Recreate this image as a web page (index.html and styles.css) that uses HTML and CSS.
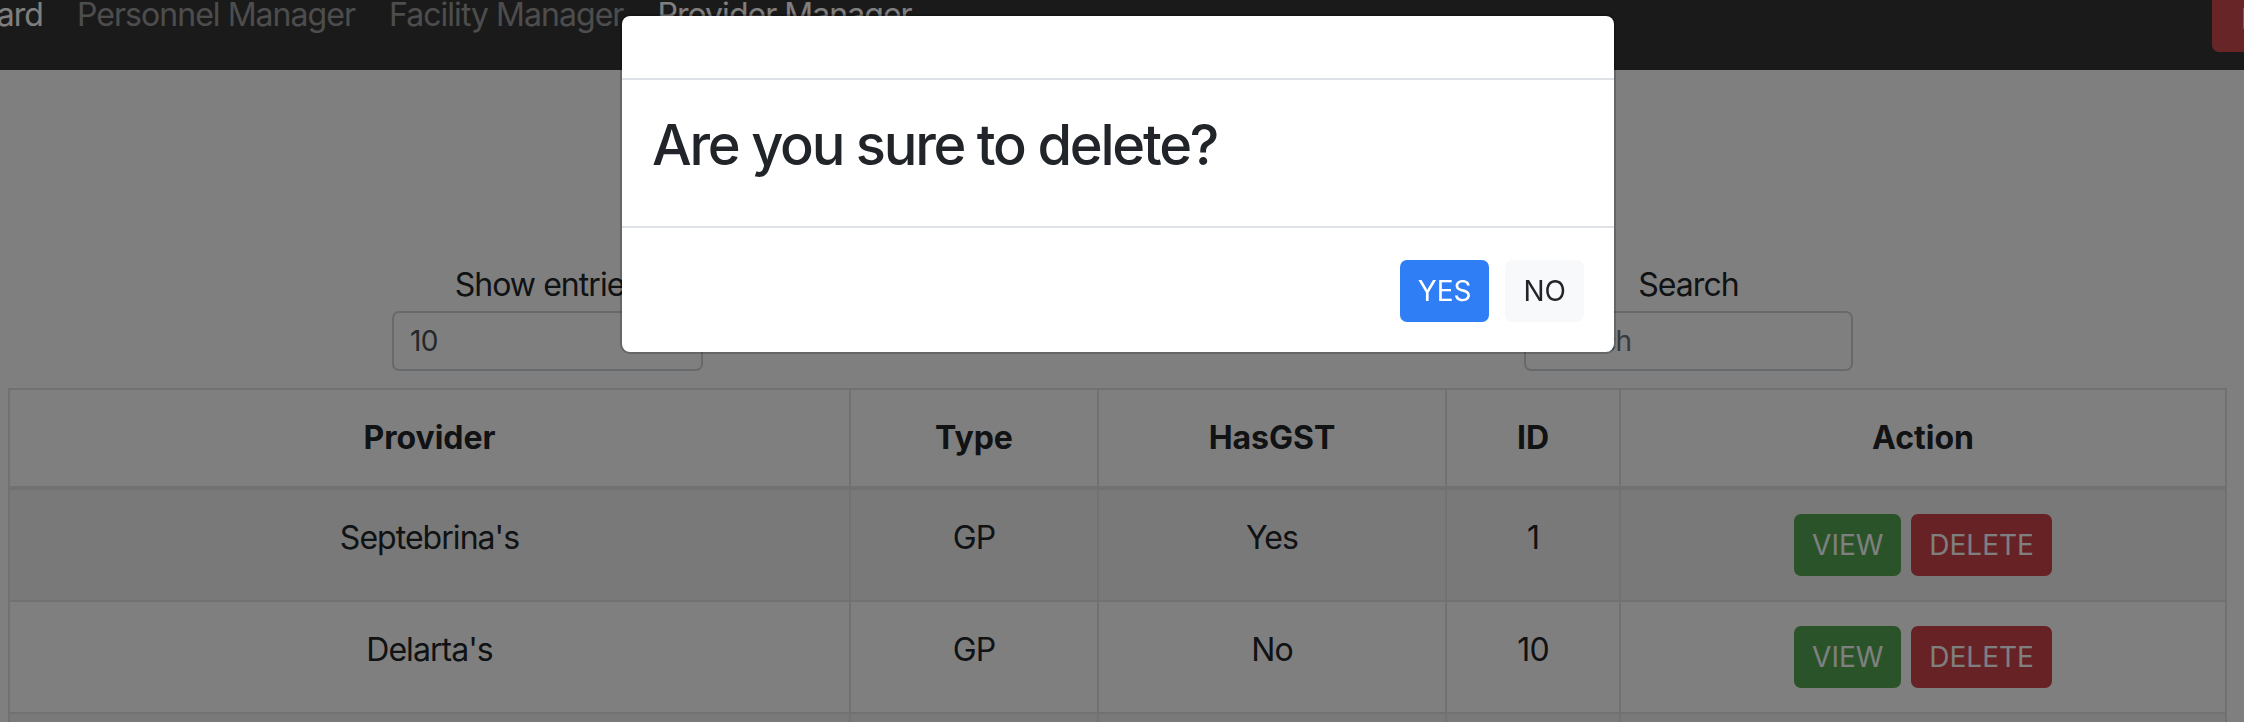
FILE: index.html
```html
<!DOCTYPE html>
<html lang="en">
<head>
<meta charset="utf-8">
<title>Provider Manager</title>
<link rel="stylesheet" href="styles.css">
</head>
<body>
<nav class="navbar">
  <div class="brand-clip"><span class="brand">Dashboard</span></div>
  <ul class="nav">
    <li><a class="nav-link">Personnel Manager</a></li>
    <li><a class="nav-link">Facility Manager</a></li>
    <li><a class="nav-link active">Provider Manager</a></li>
  </ul>
  <button class="btn-logout">Logout</button>
</nav>
<main class="page">
  <div class="controls">
    <label class="control">
      <span class="control-label">Show entries</span>
      <select class="form-control"><option>10</option><option>25</option><option>50</option></select>
    </label>
    <label class="control">
      <span class="control-label">Search</span>
      <input class="form-control" type="text" placeholder="Search">
    </label>
  </div>
  <table class="table">
    <colgroup>
      <col class="col-provider">
      <col class="col-type">
      <col class="col-gst">
      <col class="col-id">
      <col class="col-action">
    </colgroup>
    <thead>
      <tr><th>Provider</th><th>Type</th><th>HasGST</th><th>ID</th><th>Action</th></tr>
    </thead>
    <tbody>
      <tr>
        <td>Septebrina's</td><td>GP</td><td>Yes</td><td>1</td>
        <td><div class="actions"><button class="btn btn-success">VIEW</button><button class="btn btn-danger">DELETE</button></div></td>
      </tr>
      <tr>
        <td>Delarta's</td><td>GP</td><td>No</td><td>10</td>
        <td><div class="actions"><button class="btn btn-success">VIEW</button><button class="btn btn-danger">DELETE</button></div></td>
      </tr>
      <tr>
        <td>&nbsp;</td><td>&nbsp;</td><td>&nbsp;</td><td>&nbsp;</td><td>&nbsp;</td>
      </tr>
    </tbody>
  </table>
</main>
<div class="backdrop"></div>
<div class="modal">
  <div class="modal-header"></div>
  <div class="modal-body"><h3 class="modal-question">Are you sure to delete?</h3></div>
  <div class="modal-footer">
    <button class="btn btn-primary">YES</button>
    <button class="btn btn-light">NO</button>
  </div>
</div>
</body>
</html>
```

FILE: styles.css
```css
* { box-sizing: border-box; }
html, body { margin: 0; padding: 0; }
body {
  width: 2244px;
  height: 722px;
  overflow: hidden;
  font-family: Inter, "Noto Sans", "Liberation Sans", sans-serif;
  font-size: 32px;
  line-height: 1.5;
  letter-spacing: -0.03em;
  color: #212529;
  background: #fff;
}

/* navbar */
.navbar {
  display: flex;
  align-items: flex-start;
  height: 70px;
  background: #353535;
  overflow: hidden;
}
.brand-clip {
  flex: none;
  width: 43px;
  display: flex;
  justify-content: flex-end;
  overflow: hidden;
  margin-top: -9px;
}
.brand { white-space: nowrap; color: #fff; }
.nav {
  flex: none;
  display: flex;
  list-style: none;
  margin: -9px 0 0;
  padding: 0 0 0 17px;
}
.nav-link {
  display: block;
  padding: 0 17px;
  white-space: nowrap;
  color: rgba(255, 255, 255, .5);
}
.nav-link.active { color: #fff; }
.btn-logout {
  flex: none;
  margin: -14px -120px 0 auto;
  width: 152px;
  height: 66px;
  padding: 8px 29px;
  border: 0;
  border-radius: 7px;
  background: #cf4a50;
  color: #fff;
  font-family: inherit;
  font-size: 28px;
  line-height: 42px;
  text-align: left;
}

/* page */
.page { padding: 191px 0 0 8px; }
.controls {
  display: grid;
  grid-template-columns: 311px 329px;
  column-gap: 821px;
  padding-left: 384px;
}
.control {
  display: flex;
  flex-direction: column;
  align-items: center;
  gap: 2px;
}
.control-label { line-height: 48px; white-space: nowrap; }
.form-control {
  display: block;
  width: 100%;
  height: 60px;
  padding: 0 16px;
  border: 2px solid #ced4da;
  border-radius: 7px;
  background: #fff;
  color: #495057;
  font-family: inherit;
  font-size: 28px;
  letter-spacing: -0.02em;
  -webkit-appearance: none;
  appearance: none;
  outline: none;
}
.form-control::placeholder { color: #6c757d; opacity: 1; }

.table {
  margin-top: 17px;
  width: 2219px;
  border-collapse: collapse;
  table-layout: fixed;
  text-align: center;
}
.col-provider { width: 841px; }
.col-type { width: 248px; }
.col-gst { width: 348px; }
.col-id { width: 174px; }
.col-action { width: 606px; }
.table th, .table td {
  border: 2px solid #dee2e6;
  padding: 24px;
  line-height: 48px;
  vertical-align: top;
}
.table thead th {
  border-bottom-width: 4px;
  vertical-align: bottom;
  font-weight: 700;
  letter-spacing: 0;
}
.table tbody tr:nth-child(odd) { background: rgba(0, 0, 0, .05); }
.actions {
  display: flex;
  justify-content: center;
  gap: 10px;
}
.btn {
  height: 62px;
  padding: 8px 16px;
  border: 2px solid transparent;
  border-radius: 7px;
  font-family: inherit;
  font-size: 28px;
  line-height: 42px;
  font-weight: 400;
  letter-spacing: 0;
  cursor: pointer;
}
.btn-success { background: #54a654; border-color: #54a654; color: #fff; }
.btn-danger { background: #cc4448; border-color: #cc4448; color: #fff; }
.btn-primary { background: #2f7ef6; border-color: #2f7ef6; color: #fff; }
.btn-light { background: #f8f9fa; border-color: #f8f9fa; color: #212529; }

/* modal */
.backdrop {
  position: fixed;
  inset: 0;
  background: rgba(0, 0, 0, .5);
}
.modal {
  position: fixed;
  top: 14px;
  left: 620px;
  width: 996px;
  background: #fff;
  background-clip: padding-box;
  border: 2px solid rgba(0, 0, 0, .2);
  border-radius: 10px;
}
.modal-header {
  height: 64px;
  border-bottom: 2px solid #dee2e6;
}
.modal-body { padding: 32px 30px 31px; }
.modal-question {
  margin: 0 0 16px;
  font-size: 56px;
  line-height: 67px;
  font-weight: 500;
  letter-spacing: -0.04em;
}
.modal-footer {
  display: flex;
  justify-content: flex-end;
  gap: 16px;
  padding: 32px 30px 30px;
  border-top: 2px solid #dee2e6;
}
```
